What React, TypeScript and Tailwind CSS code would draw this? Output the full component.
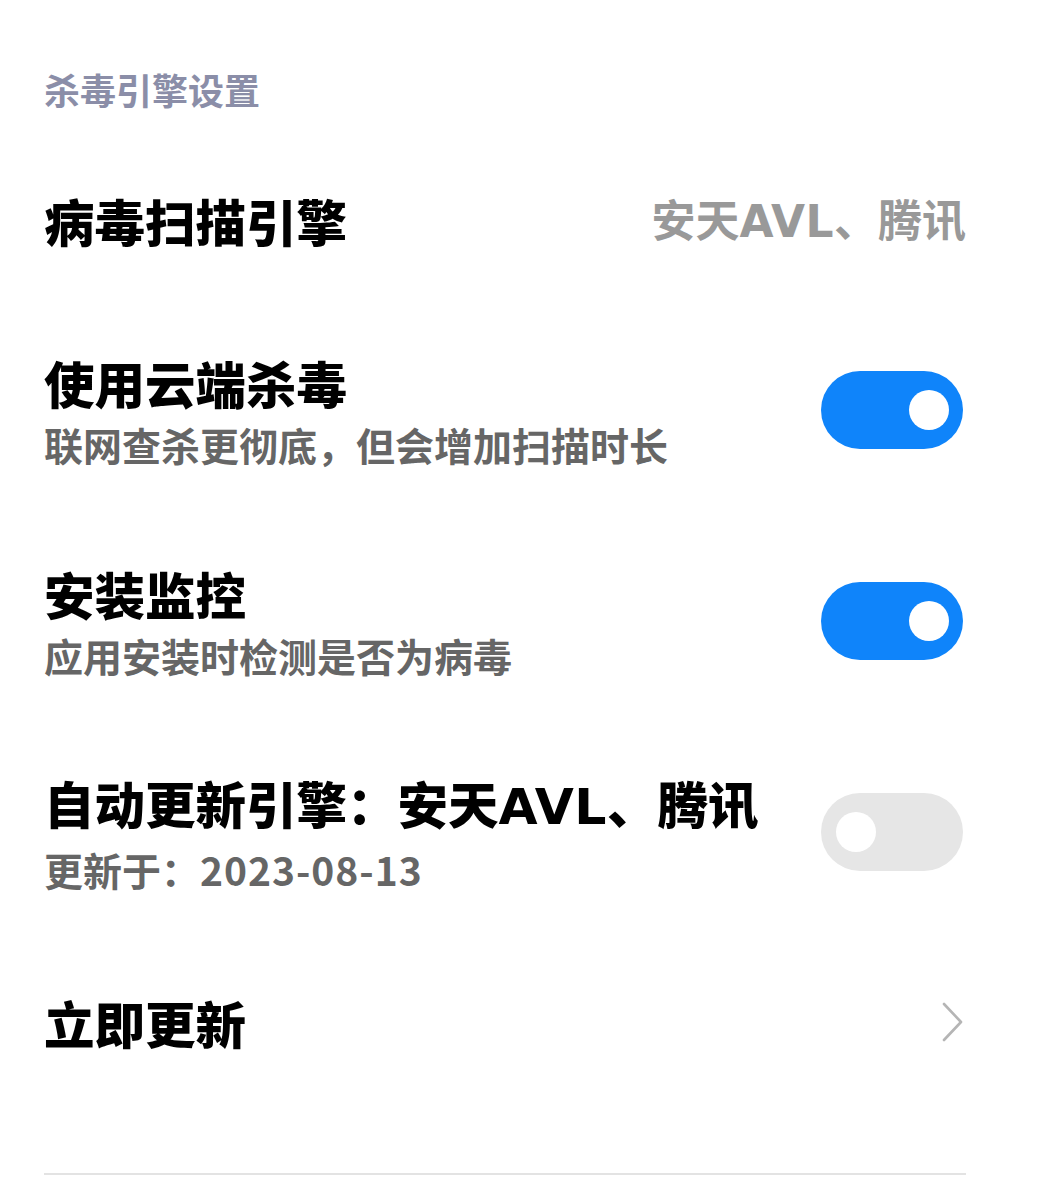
import React, { useState } from "react";

const font = { fontFamily: '"Noto Sans CJK SC", "Noto Sans", sans-serif' };

function Toggle({ on, onChange }: { on: boolean; onChange: () => void }) {
  return (
    <button
      onClick={onChange}
      className={`relative mr-[3px] w-[142px] h-[78px] shrink-0 rounded-full ${on ? "bg-[#0f84fa]" : "bg-[#e6e6e6]"}`}
    >
      <span
        className={`absolute top-[19px] w-[40px] h-[40px] rounded-full bg-white ${on ? "right-[14px]" : "left-[15px]"}`}
      />
    </button>
  );
}

// Latin part in the engine names is wider in the reference than in the CJK font
const Engines = () => (
  <>
    安天<span className="font-['DejaVu_Sans',sans-serif] font-bold tracking-[0.01em]">AVL</span>、腾讯
  </>
);

interface RowProps {
  title: React.ReactNode;
  subtitle?: React.ReactNode;
  height: string;
  right: React.ReactNode;
}

function Row({ title, subtitle, height, right }: RowProps) {
  return (
    <div className={`flex items-center justify-between gap-6 ${height}`}>
      <div className="flex flex-col">
        <span className="text-[50.5px] leading-[60px] font-black text-black">{title}</span>
        {subtitle && (
          <span className="mt-[8px] text-[39px] leading-[48px] font-bold text-[#666666]">{subtitle}</span>
        )}
      </div>
      {right}
    </div>
  );
}

export default function App() {
  const [cloud, setCloud] = useState(true);
  const [install, setInstall] = useState(true);
  const [auto, setAuto] = useState(false);

  return (
    <div style={font} className="w-[1041px] min-h-[1181px] bg-white pl-[44px] pr-[75px] overflow-hidden">
      <div className="h-[130px] pt-[68px]">
        <span className="text-[36px] leading-[43px] font-bold text-[#8b8ea8]">杀毒引擎设置</span>
      </div>

      <Row
        title="病毒扫描引擎"
        height="h-[180px]"
        right={
          <span className="text-[44px] leading-none font-bold text-[#999999]">
            <Engines />
          </span>
        }
      />
      <Row
        title="使用云端杀毒"
        subtitle="联网查杀更彻底，但会增加扫描时长"
        height="h-[200px]"
        right={<Toggle on={cloud} onChange={() => setCloud(!cloud)} />}
      />
      <Row
        title="安装监控"
        subtitle="应用安装时检测是否为病毒"
        height="h-[222px]"
        right={<Toggle on={install} onChange={() => setInstall(!install)} />}
      />
      <Row
        title={
          <>
            自动更新引擎：<Engines />
          </>
        }
        subtitle={
          <>
            更新于：<span className="tracking-[0.025em]">2023-08-13</span>
          </>
        }
        height="h-[200px]"
        right={<Toggle on={auto} onChange={() => setAuto(!auto)} />}
      />
      <Row
        title="立即更新"
        height="h-[180px]"
        right={
          <svg width="24" height="40" viewBox="0 0 24 40" fill="none" className="mr-[1px]">
            <polyline points="3,2 20,20 3,38" stroke="#b5b5b5" strokeWidth="2.6" strokeLinecap="round" strokeLinejoin="round" />
          </svg>
        }
      />

      <div className="mt-[61px] h-[2px] bg-[#e3e3e3]" />
    </div>
  );
}
